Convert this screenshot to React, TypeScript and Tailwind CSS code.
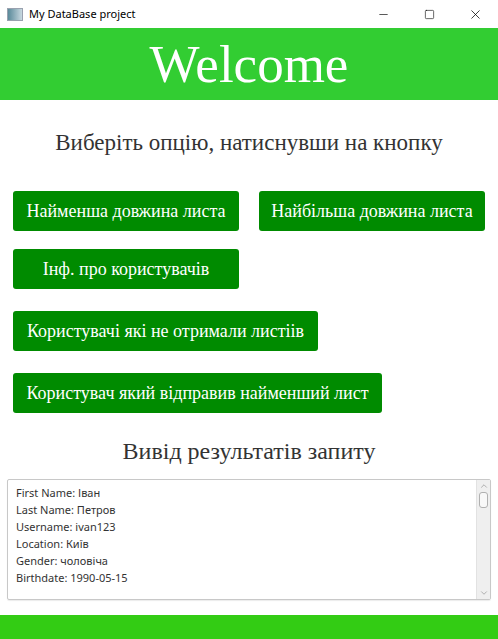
import React from "react";
import { Minus, Square, X, ChevronUp, ChevronDown } from "lucide-react";

const lines = [
  "First Name: Іван",
  "Last Name: Петров",
  "Username: ivan123",
  "Location: Київ",
  "Gender: чоловіча",
  "Birthdate: 1990-05-15",
];

const Btn = ({ label, w }: { label: string; w: string }) => (
  <button
    className={`h-[40px] ${w} bg-[#008b00] text-white text-[18px] font-['Liberation_Serif',serif] rounded-[3px] flex items-center justify-center whitespace-nowrap`}
  >
    {label}
  </button>
);

const App = () => {
  return (
    <div className="w-[498px] h-[639px] bg-white flex flex-col overflow-hidden font-['Noto_Sans',sans-serif]">
      <div className="h-[28px] flex items-center justify-between shrink-0">
        <div className="flex items-center gap-[6px] pl-[7px]">
          <div className="w-[16px] h-[13px] border border-gray-400 bg-gradient-to-r from-[#5a8a9a] to-[#c8d8e0]" />
          <span className="text-[11px] text-black">My DataBase project</span>
        </div>
        <div className="flex items-center h-full">
          <div className="w-[46px] flex justify-center"><Minus size={13} strokeWidth={1.2} /></div>
          <div className="w-[46px] flex justify-center"><Square size={11} strokeWidth={1.3} /></div>
          <div className="w-[46px] flex justify-center"><X size={15} strokeWidth={1.2} /></div>
        </div>
      </div>

      <div className="h-[72px] bg-[#32cd32] flex items-center justify-center shrink-0">
        <span className="text-white text-[53px] leading-none font-['Liberation_Serif',serif]">Welcome</span>
      </div>

      <div className="mt-[28px] text-center text-[23px] leading-[30px] text-[#333] font-['Liberation_Serif',serif]">
        Виберіть опцію, натиснувши на кнопку
      </div>

      <div className="px-[13px] mt-[33px] flex flex-col">
        <div className="flex gap-[20px]">
          <Btn label="Найменша довжина листа" w="w-[226px]" />
          <Btn label="Найбільша довжина листа" w="w-[226px]" />
        </div>
        <div className="mt-[18px]">
          <Btn label="Інф. про користувачів" w="w-[226px]" />
        </div>
        <div className="mt-[22px]">
          <Btn label="Користувачі які не отримали листіів" w="w-[305px]" />
        </div>
        <div className="mt-[22px]">
          <Btn label="Користувач який відправив найменший лист" w="w-[369px]" />
        </div>
      </div>

      <div className="mt-[23px] text-center text-[24px] leading-[30px] text-[#333] font-['Liberation_Serif',serif]">
        Вивід результатів запиту
      </div>

      <div className="mx-[7px] mt-[13px] h-[121px] border border-[#c8c8c8] rounded-[2px] flex shadow-[0_1px_1px_rgba(0,0,0,0.08)]">
        <div className="flex-1 pl-[8px] pt-[4px] text-[11px] leading-[17px] text-[#333]">
          {lines.map((l) => (
            <div key={l}>{l}</div>
          ))}
        </div>
        <div className="w-[14px] bg-[#efefef] border-l border-[#e2e2e2] flex flex-col items-center justify-between py-[1px]">
          <ChevronUp size={10} strokeWidth={1.5} className="text-[#888]" />
          <div className="flex-1 w-full flex flex-col items-center pt-[1px]">
            <div className="w-[9px] h-[16px] bg-[#f8f8f8] border border-[#b0b0b0] rounded-[3px]" />
          </div>
          <ChevronDown size={10} strokeWidth={1.5} className="text-[#888]" />
        </div>
      </div>

      <div className="mt-auto h-[24px] bg-[#33cc14] shrink-0" />
    </div>
  );
};

export default App;
